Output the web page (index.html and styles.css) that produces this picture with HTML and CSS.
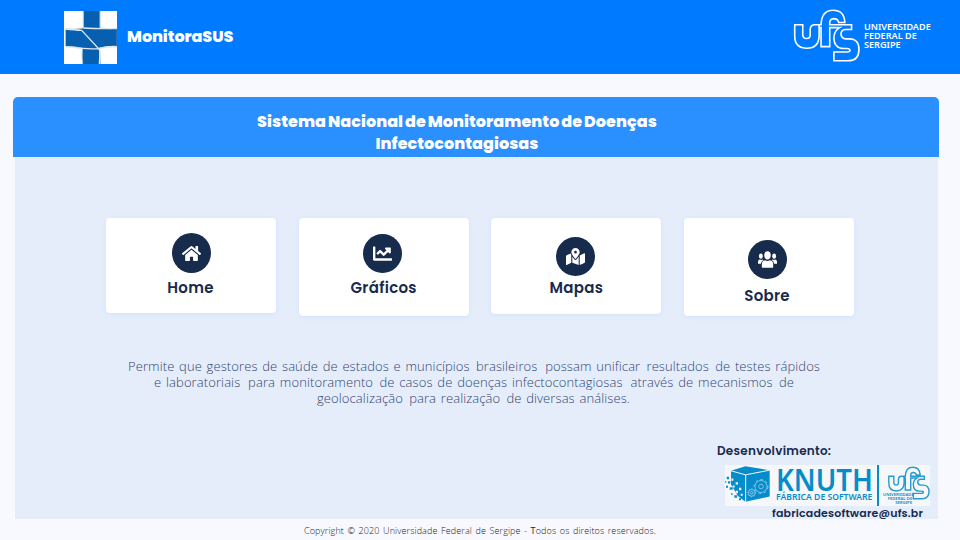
FILE: index.html
```html
<!DOCTYPE html>
<html lang="pt-BR">
<head>
<meta charset="utf-8">
<title>MonitoraSUS</title>
<link rel="stylesheet" href="styles.css">
</head>
<body>
<svg class="defs" aria-hidden="true">
  <symbol id="ufs" viewBox="37 24 209 165">
    <path d="M41 73H66V105Q67 116 78 116Q89 116 89 105V87Q90 73 104 73H123C124 45 136 28 160 28C184 28 196 43 197 66H178Q175 54 162 54Q150 55 150 67V73H218V88H197Q185 90 185 103Q187 116 200 117H212C230 117 241 129 241 149C241 172 229 185 208 185H163V158H205Q214 157 213 151Q211 147 204 147H194C174 147 163 134 163 114Q163 92 181 82H150V141H123V82H117V108C116 134 102 146 79 146C54 146 41 132 41 108Z"/>
    <path d="M117 82V73"/>
  </symbol>
</svg>
<header class="topbar">
  <div class="brand">
    <svg class="brand-logo" viewBox="0 0 159 159">
      <path fill="#fff" d="M0 0h159v159H0z"/>
      <path fill="#075faf" stroke="#b5cbe1" stroke-width="3" d="M58 -2H108V51Q135 54 160 53V107Q132 105 106 111L110 161H56Q53 138 55 112Q30 105 4 107V54Q35 56 58 51Z"/>
      <path fill="none" stroke="#dce9f4" stroke-width="4" d="M4 54Q35 57 53 58L104 113Q132 105 160 107M58 51Q110 54 160 52M4 107Q55 115 104 113L108 120 106 161"/>
    </svg>
    <span class="brand-name">MonitoraSUS</span>
  </div>
  <div class="ufs">
    <svg class="ufs-mark"><use href="#ufs"/></svg>
    <div class="ufs-text">UNIVERSIDADE<br>FEDERAL DE<br>SERGIPE</div>
  </div>
</header>
<main>
  <h1><span class="h-one">Sistema Nacional de Monitoramento de Doenças</span><br><span class="h-two">Infectocontagiosas</span></h1>
  <section class="panel">
    <nav class="cards">
      <a class="card home"><span class="disc"><svg viewBox="0 0 576 512"><path d="M280.400 148.300 96 300.100V464a16 16 0 0 0 16 16l112.100-.3a16 16 0 0 0 15.900-16V368a16 16 0 0 1 16-16h64a16 16 0 0 1 16 16v95.600a16 16 0 0 0 16 16.100L464 480a16 16 0 0 0 16-16V300L295.700 148.300a12.200 12.200 0 0 0-15.300 0zM571.600 251.500 488 182.600V44a12 12 0 0 0-12-12h-56a12 12 0 0 0-12 12v72.600l-89.500-73.700a48 48 0 0 0-61 0L4.300 251.500a12 12 0 0 0-1.600 16.900l25.500 31a12 12 0 0 0 16.900 1.600l235.200-193.700a12.200 12.200 0 0 1 15.300 0L530.900 301a12 12 0 0 0 16.900-1.600l25.500-31a12 12 0 0 0-1.700-16.900z"/></svg></span><span class="label">Home</span></a>
      <a class="card graf"><span class="disc"><svg viewBox="0 0 512 512"><path d="M496 384H64V80c0-8.800-7.200-16-16-16H16C7.200 64 0 71.200 0 80v336c0 17.700 14.300 32 32 32h464c8.800 0 16-7.200 16-16v-32c0-8.800-7.200-16-16-16zM464 96H345.900c-21.400 0-32.100 25.900-17 41l32.400 32.400L288 242.700l-73.400-73.400c-12.500-12.500-32.800-12.500-45.300 0l-68.700 68.700c-6.200 6.200-6.200 16.400 0 22.600l22.600 22.600c6.200 6.200 16.400 6.200 22.600 0L192 237.300l73.400 73.400c12.500 12.500 32.800 12.500 45.300 0l96-96L439 247c15.100 15.100 41 4.400 41-17V112c0-8.800-7.200-16-16-16z"/></svg></span><span class="label">Gráficos</span></a>
      <a class="card mapas"><span class="disc"><svg viewBox="0 0 576 512"><path fill-rule="evenodd" d="M288 0c-69.600 0-126 56.400-126 126 0 56.300 82.400 158.800 113.900 196 6.400 7.500 17.800 7.500 24.200 0C331.700 284.800 414 182.300 414 126 414 56.400 357.600 0 288 0zm0 168a42 42 0 1 1 0-84 42 42 0 0 1 0 84z"/><path d="M20.100 216A32 32 0 0 0 0 245.700v250.300c0 11.300 11.400 19.100 21.900 14.900L160 448V214.900c-8.800-16-16.100-31.500-21.300-46.400zM288 359.700c-14.100 0-27.400-6.200-36.500-17-19.700-23.200-40.600-49.600-59.500-76.700V448l192 64V266c-18.900 27.100-39.800 53.500-59.500 76.700-9.100 10.800-22.400 17-36.500 17zM554.100 161.200 416 224v288l139.900-56a32 32 0 0 0 20.100-29.700V176c0-11.300-11.400-19.100-21.900-14.800z"/></svg></span><span class="label">Mapas</span></a>
      <a class="card sobre"><span class="disc"><svg viewBox="0 0 640 512"><ellipse cx="320" cy="115" rx="108" ry="140"/><ellipse cx="96" cy="146" rx="64" ry="88"/><ellipse cx="544" cy="146" rx="64" ry="88"/><path d="M129 512V417Q129 293 238 281Q320 331 402 281Q511 293 511 417V512Q511 532 491 532H149Q129 532 129 512zM0 394V330Q0 265 60 257Q105 282 158 260L177 274Q111 313 99 396H0zM640 394V330Q640 265 580 257Q535 282 482 260L463 274Q529 313 541 396H640z"/></svg></span><span class="label">Sobre</span></a>
    </nav>
    <p class="intro">
      <span class="p-one">Permite que gestores de saúde de estados e municípios<i> </i>brasileiros<i class="wide"> </i>possam unificar<i> </i>resultados<i> </i>de testes rápidos</span>
      <span class="p-two">e laboratoriais<i class="wide"> </i>para monitoramento<i> </i>de casos de doenças infectocontagiosas<i class="wide"> </i>através de mecanismos<i> </i>de</span>
      <span class="p-three">geolocalização<i> </i>para realização<i> </i>de diversas análises.</span>
    </p>
    <div class="credits">
      <div class="dev">Desenvolvimento:</div>
      <div class="knuth">
        <svg class="cube" viewBox="0 0 138 122">
          <path fill="#078ccb" d="M18 17 61 3 134 15V94L61 110 38 92 30 78 18 58z"/>
          <path fill="none" stroke="#f5f7f9" stroke-width="3" d="M18 17 62 29 134 15M62 29V110"/>
          <g fill="#078ccb"><path d="M5 35h7v7H5zM0 48h4v4H0zM9 48h7v7H9zM3 62h6v6H3zM14 66h9v8h-9zM18 84h5v5h-5zM28 90h8v8h-8zM42 99h6v6h-6z"/></g>
          <g fill="#f5f7f9"><path d="M19 40h6v7h-6zM32 51h7v7h-7zM23 61h6v6h-6zM42 68h7v7h-7zM32 77h7v7h-7zM47 86h6v6h-6z"/></g>
          <g fill="none" stroke="#b2dcf0" stroke-width="2"><circle cx="108" cy="64" r="7"/><circle cx="108" cy="64" r="18"/><circle cx="108" cy="64" r="21" stroke-dasharray="8 8"/><circle cx="80" cy="83" r="4"/><circle cx="80" cy="83" r="10"/><circle cx="80" cy="83" r="12" stroke-dasharray="4 5"/></g>
        </svg>
        <div class="knuth-text"><b>KNUTH</b><span>FÁBRICA DE SOFTWARE</span></div>
        <div class="mini-ufs"><svg><use href="#ufs"/></svg><div class="mini-text">UNIVERSIDADE<br>FEDERAL DE<br>SERGIPE</div></div>
      </div>
      <div class="mail">fabricadesoftware@ufs.br</div>
    </div>
  </section>
</main>
<footer><span>Copyright © 2020 Universidade Federal de Sergipe - <b>T</b>odos os direitos reservados.</span></footer>
</body>
</html>
```
FILE: styles.css
```css
* { box-sizing: border-box; }
body { margin: 0; width: 960px; height: 540px; overflow: hidden; background: #f8f9fe; font-family: Poppins, Inter, sans-serif; color: #172b4d; }
.defs { display: none; }
.topbar { height: 74px; background: #007bff; display: flex; justify-content: space-between; padding: 9px 29px 0 64px; color: #fff; }
.brand { display: flex; padding-top: 2px; gap: 10px; }
.brand-logo { width: 53px; height: 53px; }
.brand-name { font-size: 16px; font-weight: 800; line-height: 52px; letter-spacing: -.08px; white-space: nowrap; }
.ufs { display: flex; gap: 3px; }
.ufs-mark { width: 68px; height: 53px; fill: none; stroke: #fff; stroke-width: 5; }
.ufs-text { width: 67px; padding-top: 14px; font: 600 9.100px/8.800px "Noto Sans", sans-serif; white-space: nowrap; }
main { margin: 23px 21px 0 13px; }
h1 { margin: 0; height: 60px; padding: 14px 38px 0 0; border-radius: 5px 5px 0 0; background: #2b90ff; color: #fff; font-size: 16px; line-height: 22px; font-weight: 800; text-align: center; white-space: nowrap; }
.h-one { letter-spacing: .06px; word-spacing: -1.200px; }
.h-two { letter-spacing: .05px; }
.panel { margin: 0 1px 0 2px; height: 362px; background: #e5edfb; display: flex; flex-direction: column; padding-top: 61px; }
.cards { display: grid; grid-template-columns: repeat(4, 170px); column-gap: 22.700px; align-items: start; height: 98px; margin-left: 91px; }
.card { display: flex; flex-direction: column; align-items: center; background: #fff; border-radius: 4px; box-shadow: 0 1px 5px #cfe2fa; }
.home { height: 95px; padding: 15px 0 0; }
.graf { height: 98px; padding: 16px 2px 0 0; }
.mapas { height: 96px; padding: 19px 2px 0 0; }
.sobre { height: 98px; padding: 22px 4px 0 0; }
.disc { width: 39px; height: 39px; border-radius: 50%; background: #172b4d; display: flex; align-items: center; justify-content: center; flex: none; }
.home .disc { height: 40px; }
.disc svg { width: 19px; height: 19px; fill: #fff; overflow: visible; }
.label { font-size: 15px; line-height: 20px; font-weight: 600; margin-top: 5px; letter-spacing: .3px; }
.home .label { padding-right: 1px; }
.graf .label { padding-left: 2px; }
.mapas .label { margin-top: 2px; padding-left: 2px; }
.sobre .label { margin-top: 7px; }
.intro { display: flex; flex-direction: column; margin: 42px 6px 0 0; font: 300 13px/16px "Open Sans", sans-serif; letter-spacing: .1px; color: #32456f; white-space: nowrap; }
.intro span { display: block; text-align-last: justify; white-space: normal; }
.intro i { word-spacing: 1.500px; }
.intro .wide { word-spacing: 3px; }
.p-one { width: 692px; margin-left: 113px; }
.p-two { width: 640px; margin-left: 139px; }
.p-three { width: 313px; margin-left: 302px; }
.credits { display: flex; flex-direction: column; margin: 36px 8px 0 702px; white-space: nowrap; }
.dev { font-size: 12px; font-weight: 600; line-height: 17px; height: 23px; letter-spacing: .27px; }
.knuth { display: flex; width: 205px; height: 41px; margin-left: 8px; background: #f5f7f9; color: #078ccb; }
.cube { width: 46px; height: 41px; flex: none; }
.knuth-text { display: flex; flex-direction: column; width: 108px; padding: 2px 0 0 5px; border-right: 2px solid #078ccb; font-family: "Noto Sans", sans-serif; }
.knuth-text b { font-size: 30px; line-height: 25px; font-weight: 600; transform: scaleX(.92); transform-origin: left; }
.knuth-text span { font-size: 9px; line-height: 10px; font-weight: 600; transform: scaleX(.955); transform-origin: left; }
.mini-ufs { width: 51px; padding-left: 9px; }
.mini-ufs svg { display: block; width: 42px; height: 36px; fill: none; stroke: #299bd1; stroke-width: 7; }
.mini-text { margin: -8px 0 0 -5px; width: 29px; text-align: right; font: 600 4.200px/4.200px "Noto Sans", sans-serif; }
.mail { font-size: 11px; line-height: 15px; font-weight: 600; margin-left: 55px; letter-spacing: .17px; }
footer { padding: 6px 0 0 304px; font: 300 9px/12px "Open Sans", sans-serif; color: #222; }
footer span { display: block; width: 352px; text-align-last: justify; letter-spacing: .12px; }
footer b { font-weight: 400; }
```
